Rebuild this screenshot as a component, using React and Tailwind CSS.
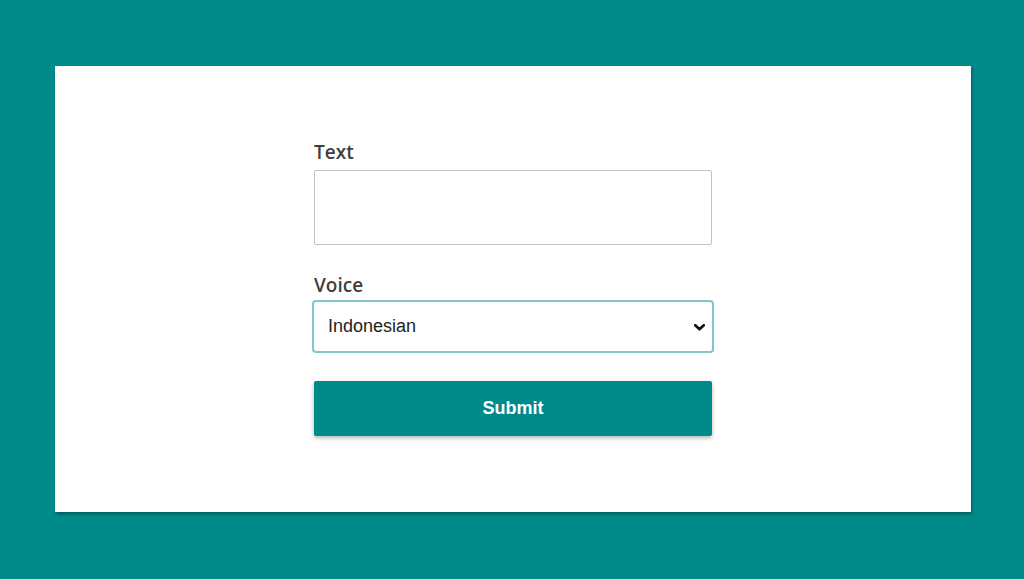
import React from "react";

export default function App() {
  return (
    <div className="min-h-[579px] w-[1024px] bg-[#008b8b] pt-[66px] overflow-hidden">
      <div className="ml-[55px] w-[916px] h-[446px] bg-white shadow-[1px_2px_3px_rgba(0,0,0,0.35)] flex justify-center pt-[73px]">
        <form className="w-[398px] flex flex-col" onSubmit={(e) => e.preventDefault()}>
          <label className="text-[19px] leading-[26px] font-semibold text-[#3f3f3f] font-['Open_Sans',sans-serif]">
            Text
          </label>
          <textarea className="mt-[5px] h-[75px] w-full border border-[#c2c2c2] rounded-[2px] resize-none outline-none"></textarea>
          <label className="mt-[27px] text-[19px] leading-[26px] font-semibold text-[#3f3f3f] font-['Open_Sans',sans-serif]">
            Voice
          </label>
          <div className="relative mt-[2px] -mx-[2px] h-[53px]">
            <select
              defaultValue="id"
              className="block appearance-none w-full h-full border-2 border-[#80c8c8] rounded-[4px] bg-white pl-[14px] text-[18px] text-[#222] font-['Liberation_Sans',Arial,sans-serif] outline-none"
            >
              <option value="id">Indonesian</option>
              <option value="en">English</option>
            </select>
            <svg
              className="absolute right-[9px] top-[24px] pointer-events-none"
              width="11"
              height="7"
              viewBox="0 0 11 7"
            >
              <polyline points="1.2,1.2 5.5,5.3 9.8,1.2" fill="none" stroke="#111" strokeWidth="2.6" strokeLinecap="round" strokeLinejoin="round" />
            </svg>
          </div>
          <button
            type="submit"
            className="mt-[28px] h-[55px] w-full bg-[#008b8b] text-white font-bold text-[18px] font-['Liberation_Sans',Arial,sans-serif] rounded-[2px] shadow-[0_2px_4px_rgba(0,0,0,0.3)]"
          >
            Submit
          </button>
        </form>
      </div>
    </div>
  );
}
